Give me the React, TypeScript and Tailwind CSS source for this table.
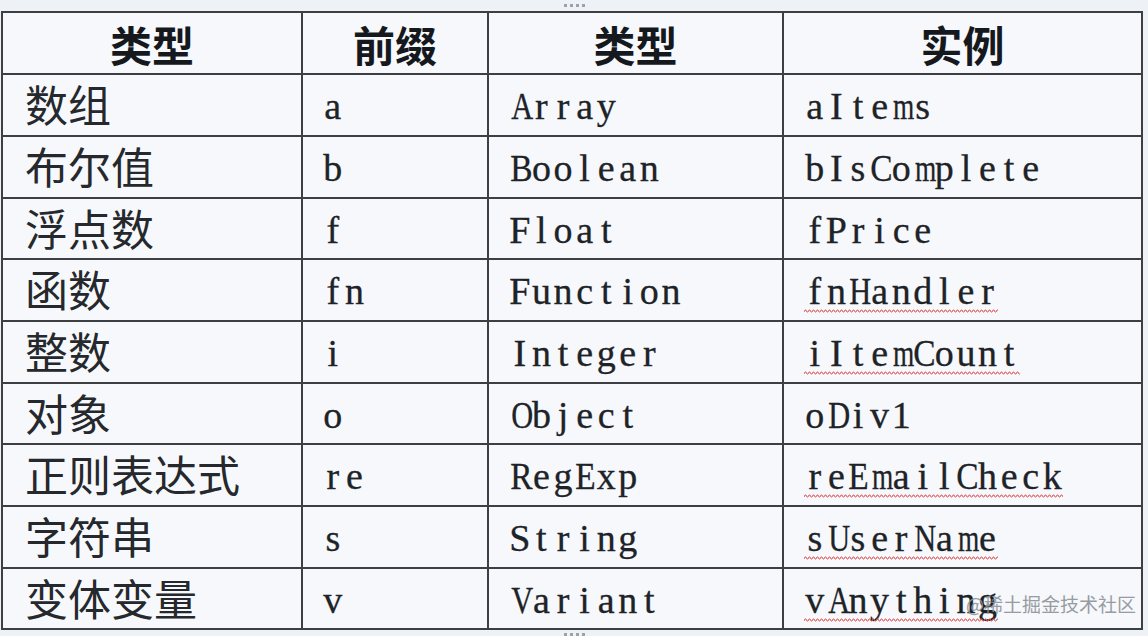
import React from 'react';

const rows: [string, string, string, string, boolean][] = [
  ['数组', 'a', 'Array', 'aItems', false],
  ['布尔值', 'b', 'Boolean', 'bIsComplete', false],
  ['浮点数', 'f', 'Float', 'fPrice', false],
  ['函数', 'fn', 'Function', 'fnHandler', true],
  ['整数', 'i', 'Integer', 'iItemCount', true],
  ['对象', 'o', 'Object', 'oDiv1', false],
  ['正则表达式', 're', 'RegExp', 'reEmailCheck', true],
  ['字符串', 's', 'String', 'sUserName', true],
  ['变体变量', 'v', 'Variant', 'vAnything', true],
];

const cjk = "font-['Noto_Sans_CJK_SC',sans-serif]";

// wide serif glyphs get squeezed into the half-width cell
function squeeze(c: string) {
  if ('mMWw'.includes(c)) return 'scale-x-[0.72]';
  if ('ADHNOUV'.includes(c)) return 'scale-x-[0.8]';
  if ('BCRE'.includes(c)) return 'scale-x-[0.88]';
  return '';
}

// half-width serif like SimSun's latin: every letter sits in a fixed cell
function Mono({ text, wavy }: { text: string; wavy?: boolean }) {
  return (
    <span className="relative inline-flex font-['Liberation_Serif',serif] text-[38px] text-[#1e2328] leading-none [-webkit-text-stroke:0.3px_#1e2328]">
      {text.split('').map((c, i) => (
        <span key={i} className={`inline-block w-[21.6px] text-center ${squeeze(c)}`}>
          {c}
        </span>
      ))}
      {wavy && (
        <svg className="absolute left-0 top-[37px] w-full h-[4px]" height="4">
          <defs>
            <pattern id={`w-${text}`} width="4" height="4" patternUnits="userSpaceOnUse">
              <path d="M0 3 L1 1 L2 1 L3 3 L4 3" fill="none" stroke="#e05a5a" strokeWidth="1" />
            </pattern>
          </defs>
          <rect width="100%" height="4" fill={`url(#w-${text})`} />
        </svg>
      )}
    </span>
  );
}

function Dots() {
  return (
    <div className="flex gap-[3px]">
      {[0, 1, 2, 3].map((i) => (
        <span key={i} className="w-[3px] h-[3px] bg-[#9aa3ad]" />
      ))}
    </div>
  );
}

export default function App() {
  return (
    <div className="relative w-[1148px] h-[636px] bg-[#eef1f5] overflow-hidden">
      <div className="h-[11px] flex items-start justify-center pt-[4px]">
        <Dots />
      </div>

      <div className="ml-[1px] w-[1142px] bg-[#3d3f42] p-[2px] grid gap-[2px] grid-cols-[298px_184px_293px_357px] grid-rows-[60px_60px_60px_59px_60px_60px_59px_60px_60px_59px]">
        {['类型', '前缀', '类型', '实例'].map((h, i) => (
          <div
            key={i}
            className={`bg-[#f6f8fb] flex items-center justify-center text-[42px] font-bold text-[#15181c] ${cjk}`}
          >
            {h}
          </div>
        ))}
        {rows.map(([name, prefix, type, example, wavy]) => (
          <React.Fragment key={prefix}>
            <div className={`bg-[#f6f8fb] flex items-center pl-[22px] pb-[3px] text-[43px] text-[#25282c] ${cjk}`}>
              {name}
            </div>
            <div className="bg-[#f6f8fb] flex items-center pl-[19px] pt-[2px]">
              <Mono text={prefix} />
            </div>
            <div className="bg-[#f6f8fb] flex items-center pl-[20px] pt-[2px]">
              <Mono text={type} />
            </div>
            <div className="bg-[#f6f8fb] flex items-center pl-[20px] pt-[2px]">
              <Mono text={example} wavy={wavy} />
            </div>
          </React.Fragment>
        ))}
      </div>

      <div className="flex justify-center pt-[3px]">
        <Dots />
      </div>

      <div className="absolute left-[966px] top-[590px] text-[19px] text-[#8e9399] opacity-90 font-['Noto_Sans_CJK_SC',sans-serif] leading-[28px]">
        @稀土掘金技术社区
      </div>
    </div>
  );
}
